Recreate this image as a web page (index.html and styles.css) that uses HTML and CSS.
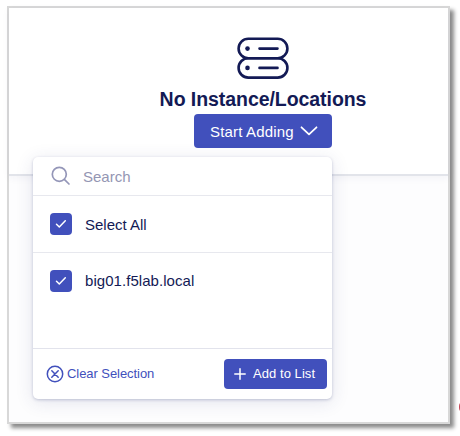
FILE: index.html
```html
<!DOCTYPE html>
<html lang="en">
<head>
<meta charset="utf-8">
<title>Instances</title>
<link rel="stylesheet" href="styles.css">
</head>
<body>
<main class="frame">
  <section class="empty">
    <svg class="servers" width="52" height="42" viewBox="0 0 52 42" fill="none" stroke="#131a55" stroke-width="2.6" stroke-linecap="round">
      <rect x="1.6" y="1.8" width="48.8" height="19.4" rx="9.7"/>
      <rect x="1.6" y="21.2" width="48.8" height="19.4" rx="9.7"/>
      <path d="M22.500 11.600H40.500M22.500 30.900H40.500"/>
      <circle cx="10.500" cy="11.600" r="2.300" fill="#131a55" stroke="none"/>
      <circle cx="10.500" cy="30.900" r="2.300" fill="#131a55" stroke="none"/>
    </svg>
    <h1 class="title">No Instance/Locations</h1>
    <button class="start"><span>Start Adding</span>
      <svg width="18" height="12" viewBox="0 0 18 12" fill="none" stroke="#fff" stroke-width="1.8" stroke-linecap="round" stroke-linejoin="round"><path d="M1.500 2.300L9 9.300L16.500 2.300"/></svg>
    </button>
  </section>
  <div class="menu">
    <div class="search">
      <svg width="20" height="20" viewBox="0 0 20 20" fill="none" stroke="#9496b8" stroke-width="1.7" stroke-linecap="round"><circle cx="8.300" cy="8.300" r="7"/><path d="M13.300 13.300L18 18"/></svg>
      <span>Search</span>
    </div>
    <div class="row all">
      <span class="check"><svg width="12" height="10" viewBox="0 0 12 10" fill="none" stroke="#fff" stroke-width="1.5" stroke-linecap="round" stroke-linejoin="round"><path d="M1.500 5.300L4.300 8L10.300 1.700"/></svg></span>
      <span>Select All</span>
    </div>
    <div class="list">
      <div class="row host">
        <span class="check"><svg width="12" height="10" viewBox="0 0 12 10" fill="none" stroke="#fff" stroke-width="1.5" stroke-linecap="round" stroke-linejoin="round"><path d="M1.500 5.300L4.300 8L10.300 1.700"/></svg></span>
        <span>big01.f5lab.local</span>
      </div>
    </div>
    <div class="footer">
      <span class="clear">
        <svg width="18" height="18" viewBox="0 0 18 18" fill="none" stroke="#4150bc" stroke-width="1.5" stroke-linecap="round"><circle cx="9" cy="9" r="7.700"/><path d="M5.800 5.800L12.200 12.200M12.200 5.800L5.800 12.200"/></svg>
        <span>Clear Selection</span>
      </span>
      <button class="add">
        <svg width="12" height="12" viewBox="0 0 12 12" stroke="#fff" stroke-width="1.5" stroke-linecap="round"><path d="M6 .8V11.200M.8 6H11.200"/></svg>
        <span>Add to List</span>
      </button>
    </div>
  </div>
</main>
<div class="marker"></div>
</body>
</html>
```

FILE: styles.css
```css
* { box-sizing: border-box; }
body {
  margin: 0;
  width: 460px;
  height: 436px;
  overflow: hidden;
  position: relative;
  background: #fff;
  color: #131a55;
  font-family: "Liberation Sans", Arial, sans-serif;
}
.frame {
  position: relative;
  width: 443px;
  height: 418px;
  margin: 6px 0 0 7px;
  border: 2px solid #d8d8d8;
  background: #fdfdfe;
  box-shadow: 4px 4px 4px rgba(0, 0, 0, .46);
}
.empty {
  display: flex;
  flex-direction: column;
  align-items: center;
  height: 168px;
  padding: 29px 0 0 69px;
  background: #fff;
  border-bottom: 2px solid #e2e4ea;
  box-shadow: 0 2px 8px rgba(40, 45, 90, .05);
}
.servers { display: block; }
.title {
  margin: 8px 0 0;
  height: 27px;
  line-height: 24px;
  font-size: 19.5px;
  letter-spacing: -.06px;
  white-space: nowrap;
}
button {
  display: flex;
  align-items: center;
  border: 0;
  border-radius: 4px;
  background: #4150bc;
  color: #fff;
  font-family: inherit;
  white-space: nowrap;
}
.start {
  width: 138px;
  height: 34px;
  padding: 0 14px 0 16px;
  justify-content: space-between;
  font-size: 15px;
  letter-spacing: .16px;
}
.menu {
  position: absolute;
  left: 24px;
  top: 149px;
  width: 299px;
  height: 242px;
  display: flex;
  flex-direction: column;
  border-radius: 5px;
  background: #fff;
  box-shadow: 0 1px 3px rgba(45, 55, 115, .25), 0 3px 18px rgba(45, 55, 115, .13);
}
.search {
  display: flex;
  align-items: center;
  gap: 12px;
  height: 39px;
  padding-left: 18px;
  border-bottom: 1px solid #e7e8ee;
  color: #9496b3;
  font-size: 15px;
}
.row {
  display: flex;
  align-items: center;
  gap: 13px;
  height: 57px;
  padding-left: 17px;
  font-size: 15px;
}
.all { border-bottom: 1px solid #e7e8ee; }
.host { height: 55px; letter-spacing: .05px; }
.check {
  display: flex;
  align-items: center;
  justify-content: center;
  width: 22px;
  height: 22px;
  border-radius: 4px;
  background: #4150bc;
}
.list { height: 96px; border-bottom: 1px solid #e2e3ec; }
.footer {
  display: flex;
  align-items: center;
  justify-content: space-between;
  height: 50px;
  padding: 0 5px 0 13px;
}
.clear {
  display: flex;
  align-items: center;
  gap: 3px;
  color: #4150bc;
  font-size: 13px;
  letter-spacing: -.06px;
}
.clear span, .add span { padding-bottom: 1px; }
.add {
  width: 103px;
  height: 30px;
  padding: 0 0 0 10px;
  gap: 7px;
  font-size: 13px;
  letter-spacing: .06px;
}
.marker {
  position: absolute;
  left: 459px;
  top: 401px;
  width: 12px;
  height: 12px;
  border-radius: 5px;
  background: #c64a5a;
}
```
